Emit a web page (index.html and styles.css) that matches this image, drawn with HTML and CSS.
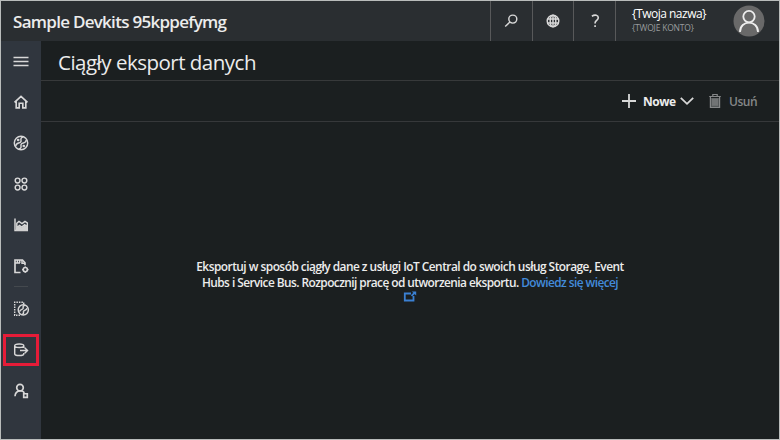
FILE: index.html
```html
<!DOCTYPE html>
<html lang="pl">
<head>
<meta charset="utf-8">
<title>Ciągły eksport danych</title>
<link rel="stylesheet" href="styles.css">
</head>
<body>
<div class="app">
  <header class="topbar">
    <div class="app-name"><span>Sample Devkits 95kppefymg</span></div>
    <div class="tool"><svg width="16" height="16" viewBox="0 0 16 16"><circle cx="9.8" cy="6.1" r="4"/><path d="M6.9 9 2.2 13.5"/></svg></div>
    <div class="tool"><svg width="16" height="16" viewBox="0 0 16 16"><circle cx="8" cy="8" r="5.8"/><ellipse cx="8" cy="8" rx="2.8" ry="5.8"/><path d="M8 2v12M2.5 6h11M2.5 10h11"/></svg></div>
    <div class="tool"><svg width="16" height="16" viewBox="0 0 16 16"><path class="thick" d="M4.9 3.2C8 1.2 11.3 2.2 11.3 4.8c0 2.5-3.2 2.7-3.2 5.2v.6M8.1 12.2v1.9"/></svg></div>
    <div class="account">
      <div class="who"><span class="user">{Twoja nazwa}</span><span class="tenant">{TWOJE KONTO}</span></div>
      <svg class="avatar" width="32" height="32" viewBox="0 0 32 32"><circle class="disc" cx="16" cy="16" r="15.5"/><circle cx="16" cy="11.6" r="5.7"/><path d="M7 27c0-12.4 18-12.4 18 0"/></svg>
    </div>
  </header>
  <div class="body">
    <nav class="side">
      <a class="item"><svg width="18" height="18" viewBox="0 0 18 18"><path d="M1.5 5.5h15M1.5 9.5h15M1.5 13.5h15"/></svg></a>
      <a class="item"><svg width="18" height="18" viewBox="0 0 18 18"><path class="thick" d="m2.5 9.3 6.5-6 6.5 6M4.2 8.5v6.3h3v-4.6h3.6v4.6h3V8.5"/></svg></a>
      <a class="item"><svg width="18" height="18" viewBox="0 0 18 18"><circle cx="9" cy="9" r="6.7"/><path d="M11.2 3C9.3 3.4 8.6 4.5 9 6.2c.4 1.6-.6 2.4-2.4 2.8-1.8.5-2.8 1.5-2.8 3M6.8 15c1.9-.4 2.6-1.5 2.2-3.2-.4-1.6.6-2.4 2.4-2.8 1.8-.5 2.8-1.5 2.8-3"/><circle cx="6.2" cy="6" r=".6"/><circle cx="11.8" cy="12" r=".6"/></svg></a>
      <a class="item"><svg width="18" height="18" viewBox="0 0 18 18"><circle cx="5.6" cy="5.5" r="2.4"/><circle cx="12.4" cy="5.5" r="2.4"/><circle cx="5.6" cy="12.5" r="2.4"/><circle cx="12.4" cy="12.5" r="2.4"/></svg></a>
      <a class="item"><svg width="18" height="18" viewBox="0 0 18 18"><path d="M3 2.5v12h12.3V6.8L13 5.3l-3 2.2-3-2-2.2 1.8v4.4l2.7-2.2 2.2 1.6 3-2.4 2.5 2"/><path class="fill" d="M4 12.2 7.4 10l2.2 1.6 3-2.3 3 2.2V15H4z"/></svg></a>
      <a class="item"><svg width="18" height="18" viewBox="0 0 18 18"><path class="thick" d="M8.5 15.5H3V3h7.5L13 5.7v2.6"/><path d="M5.4 3v3M7.7 3v3M10 3v3.3h3M3 6h5"/><circle class="thick" cx="13.3" cy="12.6" r="2.1"/><path d="M13.3 9.4v1.3m0 3.8v1.3M10.1 12.6h1.3m3.8 0h1.3"/></svg></a>
      <i class="divider"></i>
      <a class="item"><svg width="18" height="18" viewBox="0 0 18 18"><path class="dots" d="M8 15.3H2.7V2.3h9V4"/><circle cx="11.3" cy="9.8" r="5.1"/><path d="M13.2 5.2c-2 .3-2.3 1.4-2 2.8.3 1.4-3.3 1.2-3.6 3.6m2 3c2-.3 2.2-1.2 1.8-2.7-.3-1.5 2.9-1.3 3.6-3.6"/></svg></a>
      <a class="item selected"><svg width="18" height="18" viewBox="0 0 18 18"><path d="M11.8 12v.7c0 2.5-9.1 2.5-9.1 0V4.8c0-2.4 9.1-2.4 9.1 0V7M2.7 4.8c0 2.3 9.1 2.3 9.1 0M8 9.5h7.3M12.7 6.8l2.8 2.7-2.8 2.7"/></svg></a>
      <a class="item"><svg width="18" height="18" viewBox="0 0 18 18"><circle class="thick" cx="8" cy="5.7" r="3.3"/><path class="thick" d="M3 14.3C3.5 7.6 11 7.7 12.2 11"/><path class="thick" d="M11.7 11.7h3.6v3.6h-3.6z"/></svg></a>
    </nav>
    <main class="main">
      <h1 class="heading"><span>Ciągły eksport danych</span></h1>
      <div class="commands">
        <svg class="plus" width="16" height="16" viewBox="0 0 16 16"><path d="M8 1v14M1 8h14"/></svg>
        <span class="new">Nowe</span>
        <svg class="chevron" width="16" height="16" viewBox="0 0 16 16"><path d="m1.8 4.8 6.2 6 6.2-6"/></svg>
        <svg class="trash" width="14" height="16" viewBox="0 0 14 16"><path class="bin" d="M3 5h8v9H3z"/><path d="M1.2 3.5h11.6M4.8 3V1.5h4.4V3M2.4 4v10.5h9.2V4M5 5.5v7.3M7 5.5v7.3M9 5.5v7.3"/></svg>
        <span class="delete">Usuń</span>
      </div>
      <section class="empty">
        <p class="first">Eksportuj w sposób ciągły dane z usługi IoT Central do swoich usług Storage, Event</p>
        <p class="second">Hubs i Service Bus. Rozpocznij pracę od utworzenia eksportu. <a>Dowiedz się więcej</a></p>
        <svg class="external" width="14" height="11" viewBox="0 0 14 11"><path d="M8 2.5H1.8v7h8.7V5"/><path d="m8.5 4.8 3.5-3.3"/><path class="tip" d="M8.8.5h4.4v4z"/></svg>
      </section>
    </main>
  </div>
</div>
</body>
</html>
```
FILE: styles.css
```css
* { box-sizing: border-box; }
body { margin: 0; font-family: "Open Sans", "Noto Sans", sans-serif; color: #ececec; }
svg { display: block; flex: none; fill: none; stroke: #d8d8d8; stroke-width: 1.45; }
.thick { stroke-width: 1.65; }
.fill { fill: #d0d0d0; stroke: none; }
.dots { stroke-dasharray: 1.5 1; }
.app { width: 780px; height: 440px; border: 1px solid #b9bcbb; background: #1b1f20; display: flex; flex-direction: column; overflow: hidden; }
.topbar { height: 40px; flex: none; display: flex; background: #2a2e31; }
.app-name { width: 489px; padding: 7px 0 0 12px; font-size: 17px; line-height: 27px; font-weight: 600; white-space: nowrap; letter-spacing: -.72px; }
.tool { width: 41.7px; border-left: 1px solid #58595a; display: flex; align-items: center; justify-content: center; }
.account { flex: 1; border-left: 1px solid #58595a; display: flex; justify-content: space-between; padding: 4px 14px 0 16px; }
.who { display: flex; flex-direction: column; white-space: nowrap; }
.user { font-size: 12px; line-height: 18px; color: #fff; letter-spacing: -.5px; font-weight: 500; }
.tenant { font-size: 8.5px; line-height: 10px; color: #999c9d; letter-spacing: -.2px; }
.avatar { stroke: #ededed; stroke-width: 1.8; }
.disc { fill: #696969; stroke: none; }
.body { flex: 1; display: flex; min-height: 0; }
.side { width: 40px; padding-right: 1px; background: #30363e; display: flex; flex-direction: column; align-items: center; }
.item { width: 36px; height: 40.9px; flex: none; display: flex; align-items: center; justify-content: center; }
.divider { width: 14px; height: 1px; background: #44494e; margin: 0 0 1px; }
.selected { height: 32px; margin: 4.5px 0 4.4px; border: 3px solid #e61c38; }
.main { flex: 1; display: flex; flex-direction: column; }
.heading { margin: 0; height: 40px; padding-left: 17px; border-bottom: 1px solid #37393a; font-size: 20.5px; line-height: 43px; font-weight: 500; letter-spacing: -.5px; white-space: nowrap; }
.commands { height: 41px; display: flex; align-items: center; justify-content: flex-end; padding-right: 22px; border-bottom: 1px solid #36383a; font-size: 12px; }
.plus { stroke-width: 1.8; margin-right: 6px; }
.new { font-weight: 700; width: 32px; letter-spacing: -.45px; }
.chevron { margin: 0 13px 0 4px; stroke-width: 1.8; }
.trash { stroke: #858788; margin-right: 7px; stroke-width: 1.2; }
.bin { fill: #55595a; stroke: none; }
.delete { width: 28px; color: #858788; font-weight: 600; letter-spacing: -.45px; }
.empty { flex: 1; padding-top: 136px; display: flex; flex-direction: column; align-items: center; font-size: 11.9px; line-height: 16px; font-weight: 600; }
.empty p { margin: 0; white-space: nowrap; letter-spacing: -.52px; }
.empty .second { letter-spacing: -.56px; }
.empty a { color: #438bda; }
.external { margin-top: 1px; stroke: #3b80d2; stroke-width: 1.8; }
.tip { fill: #3b80d2; stroke: none; }
```
